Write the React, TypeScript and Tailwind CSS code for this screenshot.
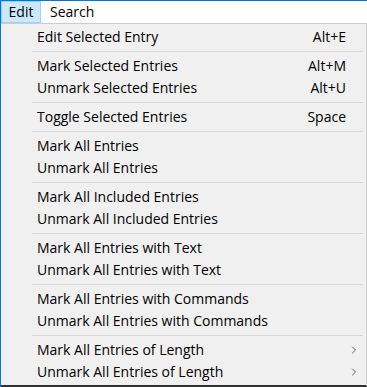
import { ChevronRight } from 'lucide-react';

type Item = { label: string; shortcut?: string; sub?: boolean };

const groups: Item[][] = [
  [{ label: 'Edit Selected Entry', shortcut: 'Alt+E' }],
  [
    { label: 'Mark Selected Entries', shortcut: 'Alt+M' },
    { label: 'Unmark Selected Entries', shortcut: 'Alt+U' },
  ],
  [{ label: 'Toggle Selected Entries', shortcut: 'Space' }],
  [{ label: 'Mark All Entries' }, { label: 'Unmark All Entries' }],
  [{ label: 'Mark All Included Entries' }, { label: 'Unmark All Included Entries' }],
  [{ label: 'Mark All Entries with Text' }, { label: 'Unmark All Entries with Text' }],
  [{ label: 'Mark All Entries with Commands' }, { label: 'Unmark All Entries with Commands' }],
  [
    { label: 'Mark All Entries of Length', sub: true },
    { label: 'Unmark All Entries of Length', sub: true },
  ],
];

function MenuRow({ item }: { item: Item }) {
  return (
    <div className="flex items-center h-[22px] pl-[36px] text-black">
      <span className="flex-1 whitespace-nowrap">{item.label}</span>
      {item.shortcut && <span className="whitespace-nowrap">{item.shortcut}</span>}
      <span className="w-[20px] flex items-center pl-[2px]">
        {item.sub && <ChevronRight size={12} strokeWidth={1.5} className="text-[#333]" />}
      </span>
    </div>
  );
}

export default function App() {
  return (
    <div
      className="w-[367px] h-[387px] bg-white border-l border-t border-[#0078d7] overflow-hidden flex flex-col text-[14px] leading-none"
      style={{ fontFamily: '"Open Sans", "Noto Sans", sans-serif' }}
    >
      {/* menu bar */}
      <div className="flex items-center h-[22px] bg-white">
        <div className="h-[22px] w-[40px] flex items-center justify-center bg-[#cce8ff] border border-[#99d1ff]">Edit</div>
        <div className="pl-[9px] flex items-center">Search</div>
      </div>

      {/* dropdown */}
      <div className="flex-1 flex flex-col bg-[#f0f0f0] border-t border-r border-[#cccccc] border-b-2 border-b-[#333] pt-[2px]">
        {groups.map((group, gi) => (
          <div key={gi}>
            {gi > 0 && (
              <div className="h-[7px] flex items-center ml-[31px] mr-[3px]">
                <div className="h-px w-full bg-[#d7d7d7]" />
              </div>
            )}
            {group.map((item) => (
              <MenuRow key={item.label} item={item} />
            ))}
          </div>
        ))}
      </div>
    </div>
  );
}
